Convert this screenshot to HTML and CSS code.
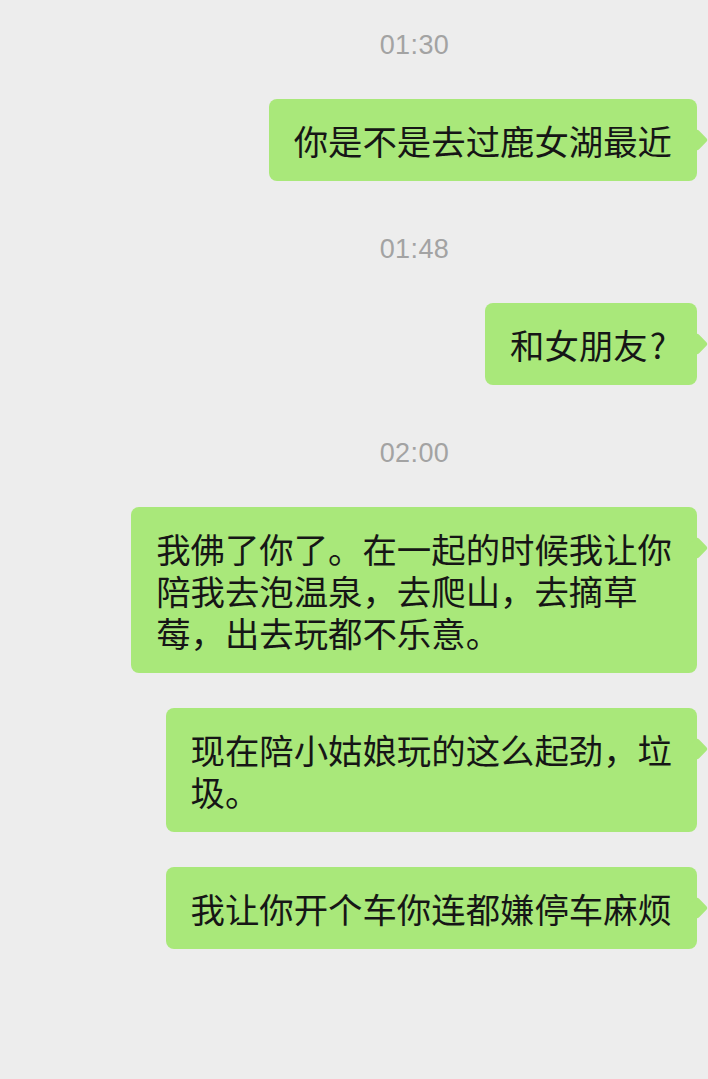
FILE: index.html
```html
<!DOCTYPE html>
<html lang="zh-CN">

<head>
    <meta charset="UTF-8">
    <meta name="viewport" content="width=device-width, initial-scale=1.0">
    <title>聊天记录</title>
    <link rel="stylesheet" href="styles.css">
</head>

<body>
    <div class="chat">
        <div class="time">01:30</div>
        <div class="row">
            <div class="bubble">你是不是去过鹿女湖最近</div>
        </div>

        <div class="time">01:48</div>
        <div class="row">
            <div class="bubble">和女朋友<span class="qmark">?</span></div>
        </div>

        <div class="time">02:00</div>
        <div class="row">
            <div class="bubble">我佛了你了。在一起的时候我让你<br>陪我去泡温泉，去爬山，去摘草<br>莓，出去玩都不乐意。</div>
        </div>
        <div class="row">
            <div class="bubble">现在陪小姑娘玩的这么起劲，垃<br>圾。</div>
        </div>
        <div class="row">
            <div class="bubble">我让你开个车你连都嫌停车麻烦</div>
        </div>
    </div>
</body>

</html>
```

FILE: styles.css
```css
body {
    margin: 0;
    background: #ededed;
    overflow: hidden;
}

.chat {
    display: flex;
    flex-direction: column;
    padding: 12px 11px 0 0;
}

.time {
    margin: 18px 0 39px;
    padding-left: 132px;
    text-align: center;
    font-family: "Liberation Sans", Arial, sans-serif;
    font-size: 27px;
    letter-spacing: 0.4px;
    line-height: 30px;
    color: #a3a3a3;
}

.row {
    display: flex;
    justify-content: flex-end;
    margin-bottom: 35px;
}

.bubble {
    position: relative;
    padding: 20px 25px;
    border-radius: 8px;
    background: #a9e87a;
    font-family: "Noto Sans CJK SC", "Noto Sans", sans-serif;
    font-size: 34.4px;
    line-height: 42px;
    color: #161616;
}

.qmark {
    padding-left: 2px;
    padding-right: 6px;
}

/* little tail on the right of a sent message */
.bubble::after {
    content: "";
    position: absolute;
    right: -8px;
    top: 33px;
    width: 16px;
    height: 16px;
    border-radius: 3px;
    background: #a9e87a;
    transform: rotate(45deg);
}
```
